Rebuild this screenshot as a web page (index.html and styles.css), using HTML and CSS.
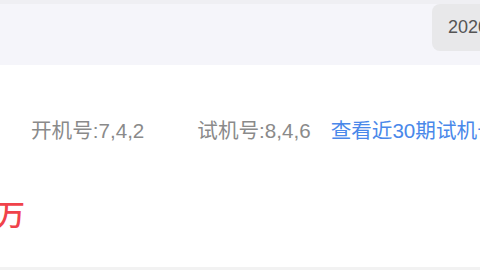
FILE: index.html
```html
<!DOCTYPE html>
<html lang="zh-CN">
<head>
  <meta charset="UTF-8" />
  <meta name="viewport" content="width=device-width, initial-scale=1.0"/>
  <title>开奖详情</title>
  <link rel="stylesheet" href="styles.css">
</head>
<body>
  <div class="top-bar">
    <div class="year-select">2020</div>
  </div>

  <div class="draw-info">
    <div class="num-row">
      <span class="num-item open-num">开机号:7,4,2</span>
      <span class="num-item test-num">试机号:8,4,6</span>
      <a class="more-link" href="#">查看近30期试机号</a>
    </div>
    <div class="pool-row">
      <span class="pool-amount">万</span>
    </div>
  </div>

  <div class="bottom-gap"></div>
</body>
</html>
```

FILE: styles.css
```css
body {
  margin: 0;
  font-family: "Liberation Sans", "Noto Sans CJK SC", sans-serif;
  background-color: #fff;
  border-top: 4px solid #efeff3;
  height: 266px;
  overflow: hidden;
  display: flex;
  flex-direction: column;
}

.top-bar {
  height: 61px;
  background-color: #f5f5fa;
  display: flex;
  align-items: center;
  justify-content: flex-end;
  overflow: hidden;
}

.year-select {
  height: 47px;
  margin-top: -14px;
  margin-right: -60px;
  padding: 0 16px;
  width: 76px;
  display: flex;
  align-items: center;
  background-color: #e8e8ea;
  border-radius: 8px;
  font-size: 18px;
  color: #555;
}

.draw-info {
  flex: 1;
  display: flex;
  flex-direction: column;
}

.num-row {
  display: flex;
  align-items: center;
  white-space: nowrap;
  margin-top: 52px;
  padding-left: 31px;
  font-size: 20.6px;
  line-height: 28px;
}

.num-item {
  color: #8a8a8a;
}

.open-num {
  margin-right: 53px;
}

.test-num {
  margin-right: 20px;
}

.more-link {
  color: #4a88ea;
  text-decoration: none;
}

.pool-row {
  margin-top: 54px;
  margin-left: -4px;
}

.pool-amount {
  font-size: 29px;
  font-weight: 500;
  line-height: 34px;
  color: #f0424a;
}

.bottom-gap {
  height: 3px;
  background-color: #f2f2f2;
}
```
